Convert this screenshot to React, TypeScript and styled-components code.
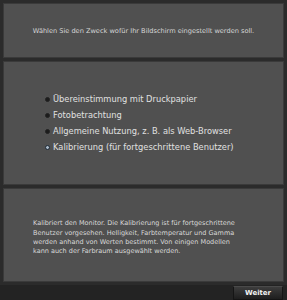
import React from "react";
import styled, { createGlobalStyle } from "styled-components";

const GlobalStyle = createGlobalStyle`
  html, body {
    margin: 0;
    padding: 0;
    background: #2b2b2b;
  }
  body {
    font-family: "DejaVu Sans", Verdana, sans-serif;
  }
`;

const Screen = styled.div`
  width: 287px;
  height: 300px;
  display: flex;
  flex-direction: column;
  background: #2b2b2b;
  padding: 3px 3px 0 3px;
  box-sizing: border-box;
  gap: 3px;
`;

const Panel = styled.div<{ $height: number }>`
  height: ${p => p.$height}px;
  box-sizing: border-box;
  background: #505050;
  border: 1px solid #3a3a3a;
  display: flex;
  flex-direction: column;
  justify-content: center;
`;

const Heading = styled.div`
  color: #d6d6d6;
  font-size: 6.6px;
  text-align: center;
`;

const OptionList = styled.ul`
  list-style: none;
  margin: 0;
  padding: 0 0 0 41px;
  display: flex;
  flex-direction: column;
  gap: 5px;
`;

const Option = styled.li`
  display: flex;
  align-items: center;
  gap: 3px;
  color: #e0e0e0;
  font-size: 8.3px;
  line-height: 11px;
`;

const Radio = styled.span<{ $checked?: boolean }>`
  width: 5px;
  height: 5px;
  border-radius: 50%;
  box-sizing: border-box;
  background: ${p => (p.$checked ? "#a9b8c6" : "#1c1c1c")};
  border: ${p => (p.$checked ? "1.5px solid #1d2a36" : "1px solid #222")};
  flex: none;
`;

const Description = styled.p`
  margin: 0;
  padding: 6px 38px 0 29px;
  color: #d9d9d9;
  font-size: 6.5px;
  line-height: 9.3px;
`;

const Footer = styled.div`
  flex: 1;
  display: flex;
  justify-content: flex-end;
  align-items: center;
  padding-right: 4px;
  background: #232323;
  margin: 0 -3px;
`;

const Button = styled.button`
  width: 50px;
  height: 14px;
  border: 1px solid #151515;
  border-top-color: #4a4a4a;
  background: linear-gradient(#3c3c3c, #1e1e1e);
  color: #f2f2f2;
  font-family: "DejaVu Sans", Verdana, sans-serif;
  font-weight: bold;
  font-size: 7px;
  padding: 0;
`;

const options = [
  "Übereinstimmung mit Druckpapier",
  "Fotobetrachtung",
  "Allgemeine Nutzung, z. B. als Web-Browser",
  "Kalibrierung (für fortgeschrittene Benutzer)",
];

export default function App() {
  return (
    <>
      <GlobalStyle />
      <Screen>
        <Panel $height={55}>
          <Heading>Wählen Sie den Zweck wofür Ihr Bildschirm eingestellt werden soll.</Heading>
        </Panel>
        <Panel $height={124}>
          <OptionList>
            {options.map((o, i) => (
              <Option key={o}>
                <Radio $checked={i === 3} />
                {o}
              </Option>
            ))}
          </OptionList>
        </Panel>
        <Panel $height={94}>
          <Description>
            Kalibriert den Monitor. Die Kalibrierung ist für fortgeschrittene Benutzer vorgesehen.
            Helligkeit, Farbtemperatur und Gamma werden anhand von Werten bestimmt. Von einigen
            Modellen kann auch der Farbraum ausgewählt werden.
          </Description>
        </Panel>
        <Footer>
          <Button>Weiter</Button>
        </Footer>
      </Screen>
    </>
  );
}
